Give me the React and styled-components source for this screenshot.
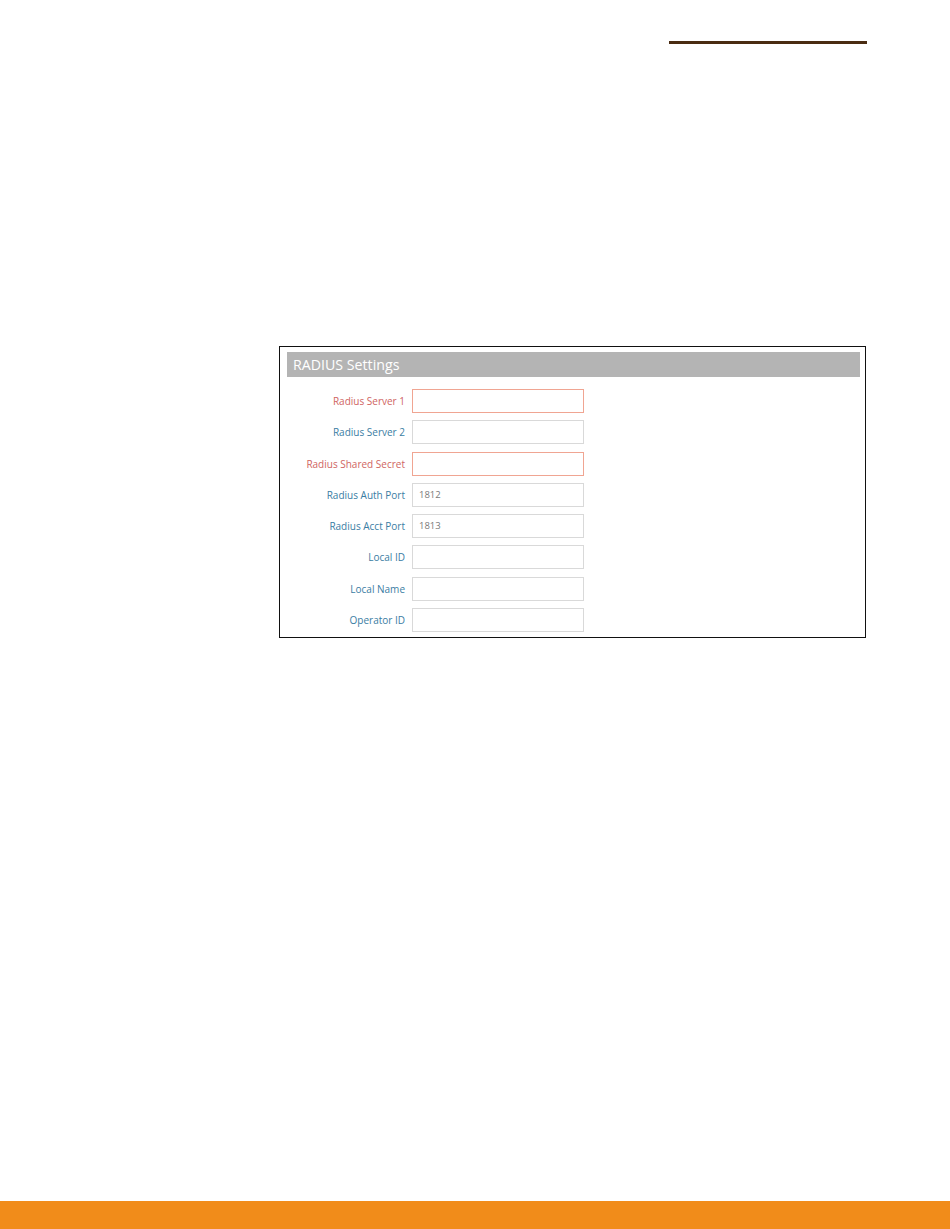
import React from "react";
import styled, { createGlobalStyle } from "styled-components";

const Global = createGlobalStyle`
  html, body { margin: 0; padding: 0; background: #fff; }
  body { font-family: "Open Sans", "Noto Sans", sans-serif; }
  *, *::before, *::after { box-sizing: border-box; }
`;

const Page = styled.div`
  width: 950px;
  height: 1229px;
  display: flex;
  flex-direction: column;
`;

const TopRule = styled.div`
  margin: 41px 0 0 669px;
  width: 198px;
  height: 3px;
  flex: none;
  background: #4a2c12;
`;

const Panel = styled.section`
  margin: 302px 0 0 279px;
  width: 587px;
  border: 1px solid #111;
  padding: 5px 5px 5px 7px;
`;

const Header = styled.div`
  height: 25px;
  background: #b4b4b4;
  color: #fff;
  font-size: 14.2px;
  line-height: 25px;
  padding-left: 6px;
`;

const Form = styled.div`
  display: grid;
  grid-template-columns: 125px 172px;
  column-gap: 7px;
  row-gap: 7.3px;
  margin-top: 12px;
  margin-left: -7px;
`;

const Label = styled.label`
  text-align: right;
  font-size: 10px;
  line-height: 24px;
  color: ${(p) => (p.$required ? "#cf6462" : "#3a7da3")};
`;

const Input = styled.div`
  height: 24px;
  border: 1px solid ${(p) => (p.$required ? "#f0a592" : "#d9d9d9")};
  font-size: 9.5px;
  color: #7a7a7a;
  line-height: 22px;
  padding-left: 6px;
`;

const Footer = styled.div`
  margin-top: auto;
  height: 28px;
  flex: none;
  background: #f18c1a;
`;

const rows = [
  { label: "Radius Server 1", required: true },
  { label: "Radius Server 2" },
  { label: "Radius Shared Secret", required: true },
  { label: "Radius Auth Port", value: "1812" },
  { label: "Radius Acct Port", value: "1813" },
  { label: "Local ID" },
  { label: "Local Name" },
  { label: "Operator ID" },
];

export default function App() {
  return (
    <Page>
      <Global />
      <TopRule />
      <Panel>
        <Header>RADIUS Settings</Header>
        <Form>
          {rows.map((r) => (
            <React.Fragment key={r.label}>
              <Label $required={r.required}>{r.label}</Label>
              <Input $required={r.required}>{r.value || ""}</Input>
            </React.Fragment>
          ))}
        </Form>
      </Panel>
      <Footer />
    </Page>
  );
}
